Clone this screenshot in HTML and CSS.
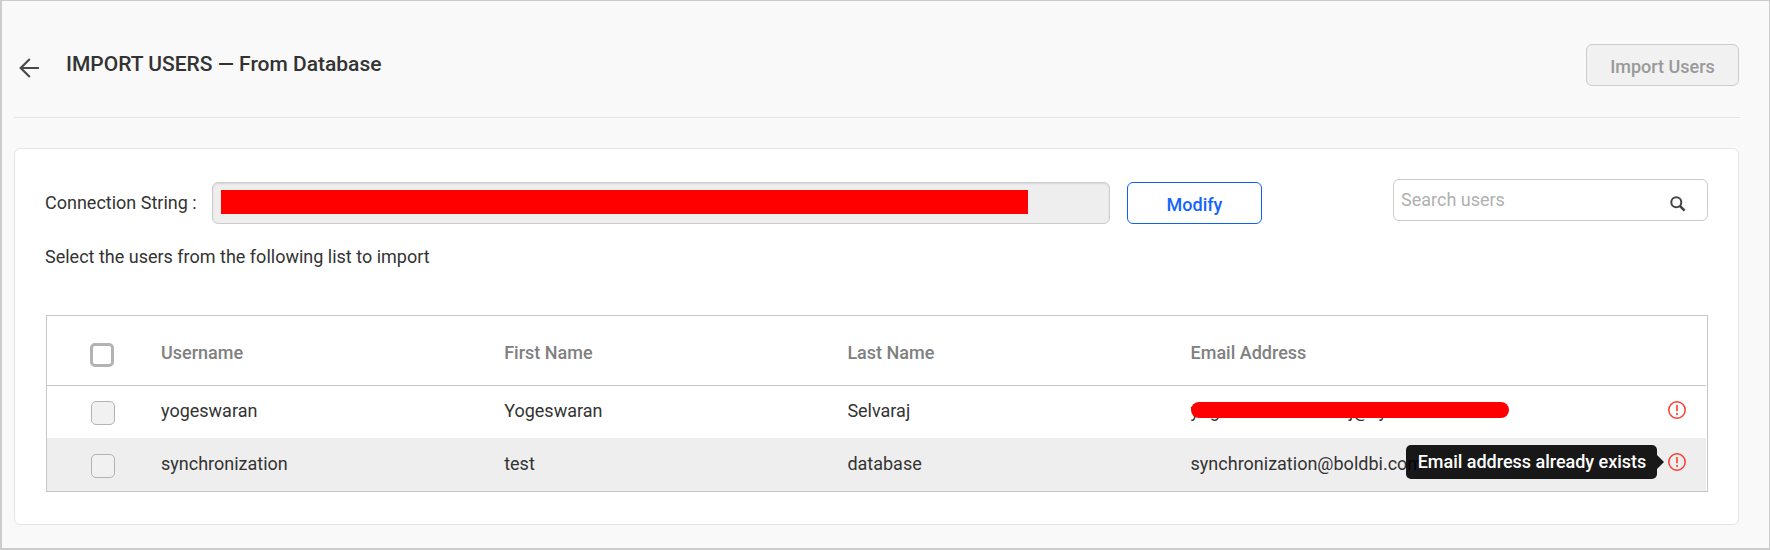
FILE: index.html
```html
<!DOCTYPE html>
<html lang="en">
<head>
<meta charset="utf-8">
<title>Import Users</title>
<link rel="stylesheet" href="styles.css">
</head>
<body>
<div class="page">
  <header class="header">
    <svg class="back" viewBox="0 0 20 20" width="20" height="20"><path d="M20 10H2M10.8 1L1.7 10l9.1 9" fill="none" stroke="#4a4a4a" stroke-width="2.2"/></svg>
    <h1 class="title">IMPORT USERS — From Database</h1>
    <button class="btn btn-import" disabled>Import Users</button>
  </header>
  <main class="card">
    <div class="toolbar">
      <label class="label">Connection String :</label>
      <div class="connection"><span class="redacted"></span></div>
      <button class="btn btn-modify">Modify</button>
      <div class="search">
        <span class="placeholder">Search users</span>
        <svg viewBox="0 0 16 16" width="16" height="16"><circle cx="6.3" cy="6.2" r="5" fill="none" stroke="#444" stroke-width="2"/><path d="M9.8 9.8L14.6 14.6" stroke="#444" stroke-width="2.6"/></svg>
      </div>
    </div>
    <p class="hint">Select the users from the following list to import</p>
    <div class="table">
      <div class="row head">
        <span class="cell"><i class="check check-all"></i></span>
        <span class="cell">Username</span><span class="cell">First Name</span><span class="cell">Last Name</span><span class="cell">Email Address</span><span class="cell"></span>
      </div>
      <div class="row">
        <span class="cell"><i class="check"></i></span>
        <span class="cell">yogeswaran</span><span class="cell">Yogeswaran</span><span class="cell">Selvaraj</span>
        <span class="cell masked"><span class="frag frag-a">y</span><span class="frag frag-b">g</span><span class="frag frag-c">j@</span><span class="frag">y</span><i class="mask"></i></span>
        <span class="cell alert"><svg viewBox="0 0 18 18" width="18" height="18"><circle cx="9" cy="9" r="8.2" fill="none" stroke="#fb3c2d" stroke-width="1.5"/><path d="M9 4v6.2M9 12v2" stroke="#fb3c2d" stroke-width="1.6"/></svg></span>
      </div>
      <div class="row alt">
        <span class="cell"><i class="check"></i></span>
        <span class="cell">synchronization</span><span class="cell">test</span><span class="cell">database</span><span class="cell">synchronization@boldbi.com</span>
        <span class="cell alert"><svg viewBox="0 0 18 18" width="18" height="18"><circle cx="9" cy="9" r="8.2" fill="none" stroke="#fb3c2d" stroke-width="1.5"/><path d="M9 4v6.2M9 12v2" stroke="#fb3c2d" stroke-width="1.6"/></svg><span class="tooltip">Email address already exists</span></span>
      </div>
    </div>
  </main>
</div>
</body>
</html>
```
FILE: styles.css
```css
* { box-sizing: border-box; }
body { margin: 0; font: 18px/24px Roboto, sans-serif; color: #333; }
.page {
  height: 550px;
  padding: 0 30px 0 12px;
  background: #f9f9f9;
  border: solid #ccc;
  border-width: 1px 1px 2px 2px;
}
.header {
  display: flex;
  align-items: flex-start;
  height: 117px;
  padding: 43px 0 0 5px;
  margin-right: -1px;
  border-bottom: 1px solid #e5e5e5;
}
.back { margin-top: 14px; }
.title { margin: 8px 0 0 27px; font-size: 21px; line-height: 24px; font-weight: 500; white-space: nowrap; }
.btn {
  height: 42px;
  padding: 4px 0 0;
  border-radius: 6px;
  font: 500 18px/36px Roboto, sans-serif;
  text-align: center;
}
.btn-import { width: 153px; margin-left: auto; margin-right: 1px; color: #999; background: #f1f1f1; border: 1px solid #ccc; }
.btn-modify { width: 135px; margin-left: 17px; color: #1264fc; background: #fff; border: 1px solid #0d62f5; }
.card {
  height: 377px;
  margin-top: 30px;
  padding: 30px 30px 0 31px;
  background: #fff;
  border: 1px solid #e5e5e5;
  border-radius: 6px;
}
.toolbar { display: flex; align-items: flex-start; height: 45px; }
.label { width: 167px; margin: 3px 0 0 -1px; line-height: 42px; }
.connection {
  width: 898px;
  height: 42px;
  margin-top: 3px;
  padding: 7px 8px;
  background: #eee;
  border: 1px solid #ccc;
  border-radius: 6px;
  box-shadow: inset 0 1px 2px rgba(0, 0, 0, .1);
}
.redacted { display: block; width: 807px; height: 24px; background: #f00; }
.btn-modify { margin-top: 3px; }
.search {
  display: flex;
  align-items: center;
  justify-content: space-between;
  width: 315px;
  height: 42px;
  margin-left: auto;
  padding: 0 21px 0 7px;
  border: 1px solid #ccc;
  border-radius: 6px;
}
.search svg { margin-top: 7px; }
.placeholder { color: #b0b0b0; }
.hint { margin: 21px 0 0 -1px; line-height: 24px; }
.table { margin-top: 46px; padding-right: 1px; border: 1px solid #c6c6c6; }
.row { display: grid; grid-template-columns: 114px 343.2px 343.2px 343.2px 1fr 51px; height: 52px; }
.cell { padding-top: 13px; white-space: nowrap; }
.head { height: 70px; border-bottom: 1px solid #c6c6c6; color: #808080; font-weight: 500; }
.head .cell { padding-top: 25px; }
.alt { height: 53px; background: #eee; }
.alt .cell { padding-top: 14px; }
.check { display: block; width: 24px; height: 24px; margin: 2px 0 0 44px; background: #f1f1f1; border: 1px solid #b3b3b3; border-radius: 5px; }
.check-all { margin: 2px 0 0 43px; background: #fff; border-width: 3px; }
.masked { position: relative; display: flex; }
.frag-a { width: 19.3px; }
.frag-b { width: 139.2px; }
.frag-c { width: 29.5px; }
.mask { position: absolute; left: 0; top: 16px; width: 318px; height: 16px; border-radius: 8px; background: #f00; }
.alert { position: relative; padding-left: 13px; }
.alert svg { display: block; margin-top: 2px; }
.alt .alert svg { margin-top: 1px; }
.tooltip {
  position: absolute;
  right: 49px;
  top: 7px;
  width: 251px;
  height: 34px;
  padding-left: 1px;
  border-radius: 5px;
  background: rgba(0, 0, 0, .9);
  color: #fff;
  font-weight: 500;
  line-height: 34px;
  letter-spacing: -.02px;
  text-align: center;
}
.tooltip::after {
  content: "";
  position: absolute;
  left: 100%;
  top: 10px;
  border: 7px solid transparent;
  border-left-color: rgba(0, 0, 0, .9);
  border-right-width: 0;
}
```
